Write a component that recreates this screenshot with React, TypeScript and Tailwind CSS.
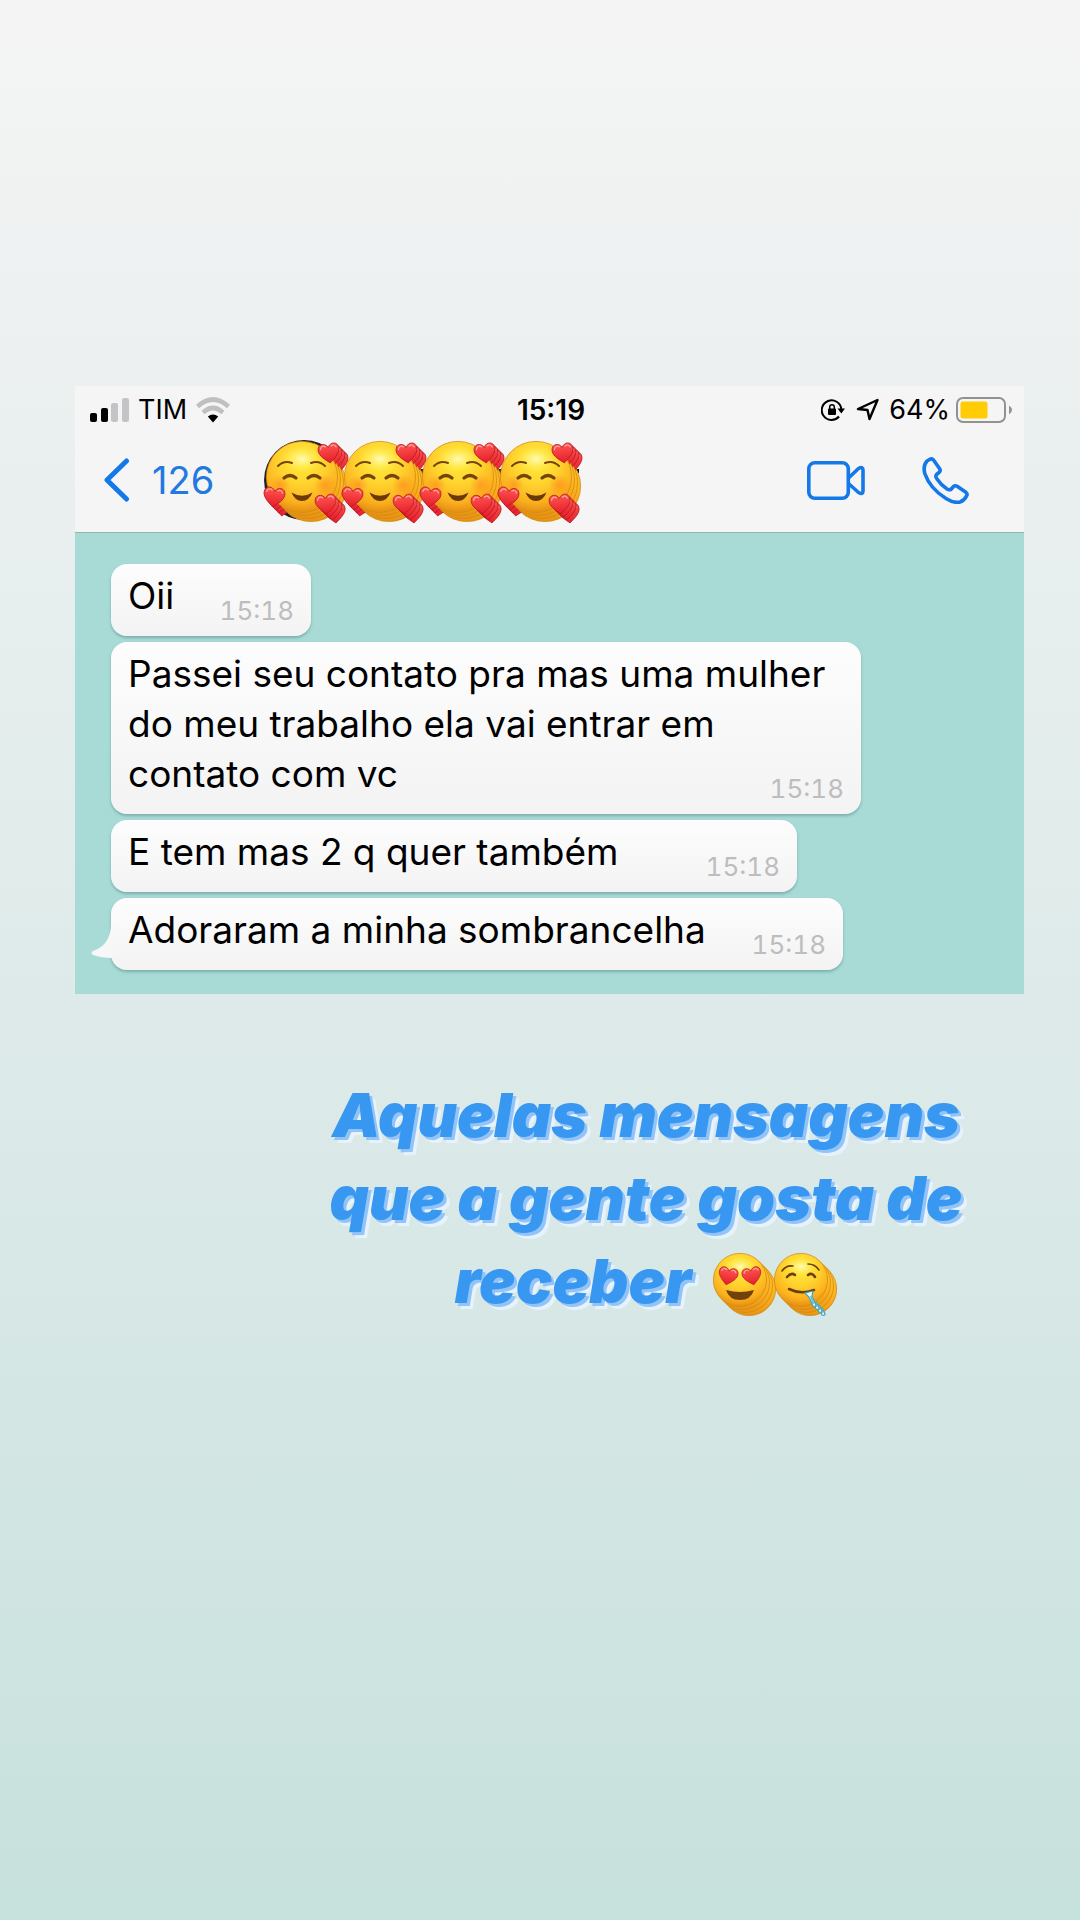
import type { ReactNode } from 'react'

const MESSAGES = [
  { lines: ['Oii'], time: '15:18', width: 'w-[200px]' },
  {
    lines: ['Passei seu contato pra mas uma mulher', 'do meu trabalho ela vai entrar em', 'contato com vc'],
    time: '15:18',
    width: 'w-[750px]',
  },
  { lines: ['E tem mas 2 q quer também'], time: '15:18', width: 'w-[686px]' },
  { lines: ['Adoraram a minha sombrancelha'], time: '15:18', width: 'w-[732px]', tail: true },
]

const BACK_LAYERS = [9, 6, 3, 0]

function EmojiDefs() {
  return (
    <svg className="absolute size-0" aria-hidden="true">
      <defs>
        <radialGradient id="face" cx="0.5" cy="0.28" r="0.74">
          <stop offset="0" stopColor="#ffec3a" />
          <stop offset="0.45" stopColor="#ffd22e" />
          <stop offset="0.78" stopColor="#fbb01e" />
          <stop offset="1" stopColor="#e08a10" />
        </radialGradient>
        <radialGradient id="shine" cx="0.5" cy="0.5" r="0.5">
          <stop offset="0" stopColor="#fffbc4" stopOpacity="0.95" />
          <stop offset="1" stopColor="#ffec3a" stopOpacity="0" />
        </radialGradient>
        <radialGradient id="blush" cx="0.5" cy="0.5" r="0.5">
          <stop offset="0" stopColor="#ff7a1a" stopOpacity="0.5" />
          <stop offset="1" stopColor="#ff7a1a" stopOpacity="0" />
        </radialGradient>
        <linearGradient id="heart" x1="0" y1="0" x2="0" y2="1">
          <stop offset="0" stopColor="#ff5650" />
          <stop offset="1" stopColor="#e41d2b" />
        </linearGradient>
      </defs>
    </svg>
  )
}

function Heart({ x, y, turn = 0, size = 1 }: { x: number; y: number; turn?: number; size?: number }) {
  return (
    <g transform={`translate(${x} ${y}) rotate(${turn}) scale(${size})`}>
      <path
        d="M0 10 C-4 6.5 -10.5 2 -10.5 -3.6 C-10.5 -10.4 -2.6 -11.2 0 -5.6 C2.6 -11.2 10.5 -10.4 10.5 -3.6 C10.5 2 4 6.5 0 10Z"
        fill="url(#heart)"
        stroke="#b51a24"
        strokeWidth="0.8"
      />
      <path d="M-8 -4.5 C-7.4 -7.4 -4.8 -8.4 -2.8 -6.6 M3 -6.6 C5 -8.2 7.2 -7.2 7.9 -5" fill="none" stroke="#ffaaa3" strokeWidth="1.2" strokeLinecap="round" />
    </g>
  )
}

function Face({ r }: { r: number }) {
  return (
    <>
      <circle r={r - 0.4} fill="url(#face)" stroke="#d58a14" strokeWidth="0.8" />
      <ellipse cy={-r * 0.5} rx={r * 0.62} ry={r * 0.38} fill="url(#shine)" />
    </>
  )
}

function LovedFace() {
  return (
    <g>
      <Face r={36} />
      <circle cx="-22" cy="8" r="10" fill="url(#blush)" />
      <circle cx="23" cy="8" r="11" fill="url(#blush)" />
      <g fill="none" stroke="#75430c" strokeLinecap="round">
        <path d="M-24 -11 Q-18 -17 -10 -14 M9 -14 Q17 -17 23 -11" strokeWidth="2" />
        <path d="M-18 1 Q-12 -4 -6 1 M6 1 Q12 -4 18 1" strokeWidth="3.2" />
      </g>
      <path d="M-10.5 15.5 Q0 22 10.5 15.5 Q7 24 0 24 Q-7 24 -10.5 15.5Z" fill="#6b3808" />
      <Heart x={27} y={-24} turn={-8} />
      <Heart x={24} y={27} turn={-6} />
      <Heart x={-28} y={20} turn={8} />
    </g>
  )
}

function HeartEyesFace() {
  return (
    <g>
      <Face r={27} />
      <Heart x={-12} y={-4} turn={12} size={0.9} />
      <Heart x={12} y={-4} turn={-12} size={0.9} />
      <path d="M-14 10 Q0 14 14 10 Q11 20 0 20 Q-11 20 -14 10Z" fill="#71410b" />
    </g>
  )
}

function DroolingFace() {
  return (
    <g>
      <Face r={27} />
      <g fill="none" stroke="#6d3e0c" strokeLinecap="round">
        <path d="M-19 -9 Q-15 -15 -8 -14 M7 -16 Q14 -16 18 -10" strokeWidth="1.6" />
        <path d="M-14 -3 Q-10 -8 -6 -5 M7 -5 Q11 -8 14 -3" strokeWidth="2.6" />
        <path d="M-12 9 Q0 15 13 10" strokeWidth="2.6" />
      </g>
      <path d="M4 13 L12 11 L11 16 L15 25 Q15 27 12 26 L8 17Z" fill="#eefbff" stroke="#3ba3bd" strokeWidth="1.2" />
      <path d="M10 16 L12.500 24" stroke="#64c3d6" strokeWidth="2" />
    </g>
  )
}

function Stacked({ x, y, children }: { x: number; y: number; children: ReactNode }) {
  return (
    <>
      {BACK_LAYERS.map(d => (
        <g key={d} transform={`translate(${x + d} ${y + d})`}>{children}</g>
      ))}
    </>
  )
}

function ContactSticker() {
  return (
    <svg width="330" height="90" viewBox="0 0 330 90" role="img" aria-label="Contato" className="shrink-0">
      <circle cx="45" cy="45" r="40" fill="#222" />
      <path d="M160 34h10v9h-10zM238 34h12v6h-12zM310 34h10v4h-10z" fill="#111" />
      {[0, 1, 2, 3].map(i => (
        <Stacked key={i} x={43 + i * 78} y={42}>
          <LovedFace />
        </Stacked>
      ))}
    </svg>
  )
}

function StatusBar() {
  return (
    <div className="grid h-12 grid-cols-3 items-center pr-3 pl-[15px] text-[27px] leading-8">
      <div className="flex items-center gap-[9px]">
        <svg width="39" height="24" viewBox="0 0 39 24" aria-hidden="true">
          <rect y="15" width="7" height="9" rx="2" />
          <rect x="11" y="10" width="7" height="14" rx="2" />
          <rect x="21" y="5" width="7" height="19" rx="2" fill="#c4c4c6" />
          <rect x="32" width="7" height="24" rx="2" fill="#c4c4c6" />
        </svg>
        <span>TIM</span>
        <svg width="34" height="26" viewBox="0 0 34 26" fill="none" aria-hidden="true">
          <path d="M1.500 9.500 Q17 -4.500 32.500 9.500" stroke="#c0c0c2" strokeWidth="4.600" />
          <path d="M7 15.500 Q17 6.500 27 15.500" stroke="#c0c0c2" strokeWidth="4.600" />
          <path d="M11.800 19.500 Q17 15.500 22.200 19.500 L17 25.500Z" fill="#000" />
        </svg>
      </div>
      <span className="text-center text-[28px] font-semibold">15:19</span>
      <div className="flex items-center justify-end gap-[10px]">
        <svg width="24" height="24" viewBox="0 0 24 24" fill="none" stroke="#000" strokeWidth="2" aria-hidden="true">
          <path d="M20.300 11 A9.800 9.800 0 1 0 18 18.500" />
          <path d="M16.500 10.500h7.500l-3.700 5z" fill="#000" stroke="none" />
          <rect x="7" y="10.500" width="8" height="6.500" rx="1" fill="#000" stroke="none" />
          <path d="M8.700 11V9a2.300 2.300 0 0 1 4.600 0v2" strokeWidth="1.500" />
        </svg>
        <svg width="24" height="24" viewBox="0 0 24 24" fill="none" stroke="#000" strokeWidth="2.400" strokeLinejoin="round" aria-hidden="true">
          <path d="M22.500 2 L3 11 L12.500 12 L14.500 21Z" />
        </svg>
        <span>64%</span>
        <svg width="56" height="26" viewBox="0 0 56 26" className="-ml-1" aria-hidden="true">
          <rect x="1" y="1" width="48" height="24" rx="6" fill="none" stroke="#929294" strokeWidth="2" />
          <rect x="4.500" y="4.500" width="27" height="17" rx="2.500" fill="#ffcc05" />
          <path d="M53 8.500 Q56 10.500 56 13 T53 17.500Z" fill="#929294" />
        </svg>
      </div>
    </div>
  )
}

function ChatHeader() {
  return (
    <header className="border-b border-[#8fb5b2] bg-[#f5f5f6] pb-1.5">
      <StatusBar />
      <nav className="flex h-[92px] items-center pr-[55px] pl-7 text-[#1479e8]">
        <button type="button" className="flex w-[112px] items-center gap-[22px] text-[38px] leading-10 text-[#2279df]">
          <svg width="27" height="44" viewBox="0 0 27 44" fill="none" stroke="#1479e8" strokeWidth="5" strokeLinecap="round" strokeLinejoin="round" className="shrink-0" aria-hidden="true">
            <path d="M23.500 3 L4 22 L23.500 41" />
          </svg>
          126
        </button>
        <div className="ml-[44px] flex-1">
          <ContactSticker />
        </div>
        <button type="button" aria-label="Chamada de vídeo">
          <svg width="58" height="39" viewBox="0 0 58 39" fill="none" stroke="currentColor" strokeWidth="3.600" strokeLinejoin="round">
            <rect x="1.800" y="1.800" width="39.500" height="35.400" rx="6" />
            <path d="M41.500 17 L51.500 7.500 Q56 5 56 9 V30 Q56 34 51.500 31.500 L41.500 22.500" />
          </svg>
        </button>
        <button type="button" aria-label="Ligar" className="ml-[57px]">
          <svg width="47" height="47" viewBox="0 0 47 47" fill="none" stroke="currentColor" strokeWidth="3.600" strokeLinejoin="round">
            <path d="M5 4 L8 2.200 Q10 1.200 11.500 3 L17.500 11.500 Q19 14 17 15.500 L14.500 17.500 Q13 19.500 15 22 Q19 28 25 32 Q27.500 33.500 29.300 32 L31.500 29.500 Q33 28 35.500 29.500 L43.500 35 Q46 37 44.500 39 Q42.500 43.500 38 45 Q32 46.500 24 41.500 Q8 31.500 3 17 Q0.500 9 5 4Z" />
          </svg>
        </button>
      </nav>
    </header>
  )
}

export default function App() {
  return (
    <main className="min-h-screen bg-linear-to-b from-[#f4f4f4] via-[#dfebea] to-[#c7e1dd] pt-[386px] font-[Inter,sans-serif] text-black">
      <EmojiDefs />
      <section className="mr-14 ml-[75px] bg-[#a8dbd6]">
        <ChatHeader />
        <ul className="flex flex-col items-start gap-1.5 pt-[31px] pr-4 pb-6 pl-9">
          {MESSAGES.map(m => (
            <li
              key={m.lines[0]}
              className={`${m.width} relative flex max-w-full items-end justify-between rounded-[16px] bg-linear-to-b from-[#fdfdfe] to-[#f3f3f4] px-[17px] pt-[7px] pb-[15px] shadow-[0_2px_3px_rgba(60,110,110,0.4)]`}
            >
              {m.tail && (
                <svg width="22" height="38" viewBox="0 0 22 38" className="absolute bottom-2 -left-5" aria-hidden="true">
                  <path d="M22 0 H20 C20 13 14 23 2 27 Q-1 29 2 31 Q10 34 22 34Z" fill="#f7f7f8" />
                </svg>
              )}
              <p className="min-w-0 flex-1 text-[37px] leading-[50px] whitespace-nowrap">
                {m.lines.map(line => (
                  <span key={line} className="block">{line}</span>
                ))}
              </p>
              <time className="-mb-1 text-[26px] leading-7 text-[#bdbdc0] tabular-nums">{m.time}</time>
            </li>
          ))}
        </ul>
      </section>

      <h1 className="mt-20 ml-[212px] text-center text-[61px] leading-[83px] font-black text-[#3897f0] italic [text-shadow:3px_3px_0_#92c4f8,6px_6px_0_#e6f3fd]">
        <span className="block">Aquelas mensagens</span>
        <span className="block">que a gente gosta de</span>
        <span className="flex items-center justify-center gap-5">
          receber
          <svg width="126" height="68" viewBox="0 0 126 68" role="img" aria-label="Emojis apaixonado e babando">
            <Stacked x={28} y={32}>
              <HeartEyesFace />
            </Stacked>
            <Stacked x={89} y={32}>
              <DroolingFace />
            </Stacked>
          </svg>
        </span>
      </h1>
    </main>
  )
}
